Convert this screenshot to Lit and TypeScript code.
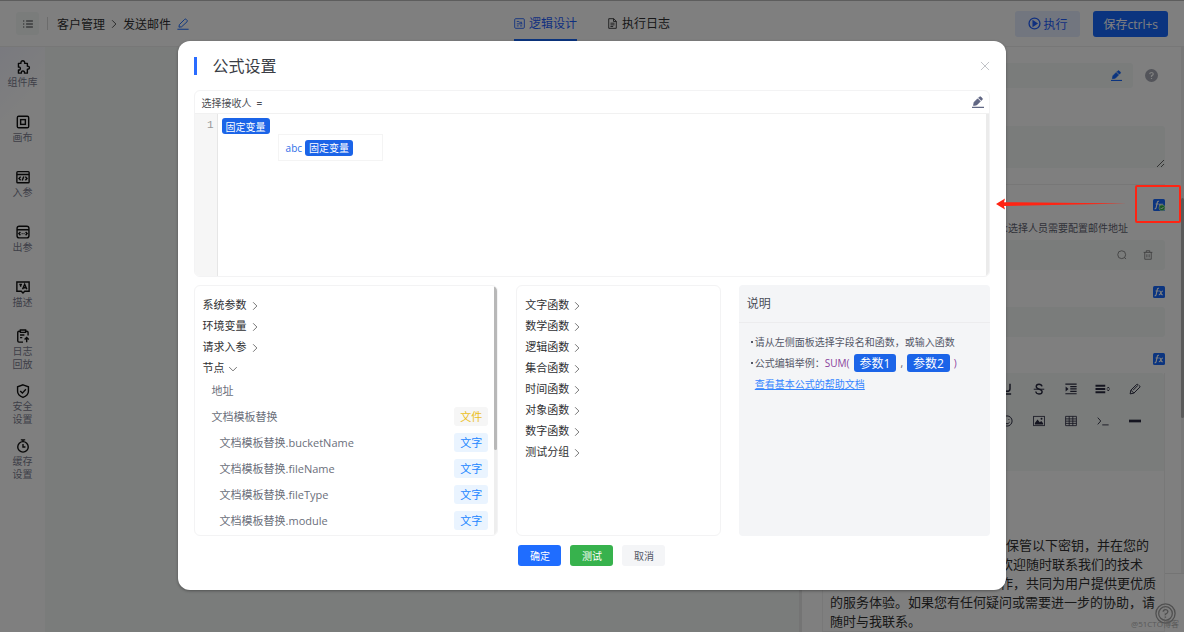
import { LitElement, html, css, svg } from "lit";
import { customElement, property } from "lit/decorators.js";

const shapes: Record<string, any> = {
  list: svg`<path d="M5.5 4h9M5.5 8h9M5.5 12h9M1.5 4h1.5M1.5 8h1.5M1.5 12h1.5"/>`,
  edit: svg`<path d="M.5 15h15M2.6 12.200l.6-3.400L10.200 1.800q1-1 2 0l1.200 1.200q1 1 0 2L6.200 11.700z"/>`,
  editSolid: svg`<path d="M0 15.200h16" stroke-width="1.600"/><path fill="currentColor" stroke="currentColor" stroke-width="1" stroke-linejoin="round" d="M2 12.600l.8-4.200 4.700-4.700 3.500 3.500-4.700 4.700zM8.800 2.500l1.100-1.100q1-.9 2 0l1.500 1.500q1 1 0 2l-1.100 1.100z"/>`,
  next: svg`<path d="M5 2l6 6-6 6"/>`,
  down: svg`<path d="M2 5l6 6 6-6"/>`,
  close: svg`<path d="M1.500 1.500l13 13M14.500 1.500l-13 13"/>`,
  puzzle: svg`<path stroke-linejoin="round" d="M2.800 3.800h2.900C5.200 1.900 6.400.9 7.800.9s2.600 1 2 2.900H13v3.300c1.600-.3 2.300.6 2.300 1.700S14.600 10.700 13 10.400V15h-3.300c.3-1.800-.6-2.500-1.800-2.500s-2 .7-1.700 2.500H2.800v-3.600c1.600.3 2.200-.6 2.200-1.700s-.8-2-2.200-1.700z"/>`,
  canvas: svg`<rect x="1.500" y="1.500" width="13" height="13" rx="1.500"/><rect x="5.300" y="5.300" width="5.400" height="5.400"/>`,
  codeIn: svg`<rect x="1" y="1.800" width="14" height="12.800" rx="1"/><path d="M1 5.200h14M5.300 7.600L3.400 9.700l1.900 2M10.700 7.600l1.900 2.100-1.900 2M8.900 7.300l-1.800 4.800"/>`,
  codeOut: svg`<rect x="1.200" y="1.500" width="13.600" height="13.200" rx="2.500"/><path d="M1.200 5.400h13.600M5 8l-1.700 1.800L5 11.600M11 8l1.700 1.800L11 11.600M6.500 9.800h1M8.700 9.800h1"/>`,
  describe: svg`<path d="M1 2.200h14v10.600h-5L8 14.800l-2-2H1zM3.800 5.200h3M5.300 5.200v2.500M7.500 10.600L9.900 4.800l2.500 5.800M8.300 8.900h3.200"/>`,
  replay: svg`<path d="M5 2.600H3.400q-1.400 0-1.400 1.400v9.500q0 1.500 1.400 1.500H8M11 2.600h1.400q1.400 0 1.400 1.400v3.500M5 1.200h6v2.600H5zM4.600 6.800h5M4.600 9.800h2.600M12.200 15.200V10M9.800 12l2.400-2.400L14.600 12"/>`,
  shield: svg`<path d="M8 .9l6.200 2.300v5.200c0 3.400-2.600 5.700-6.200 6.900-3.600-1.200-6.200-3.500-6.200-6.900V3.200zM4.800 8l2.500 2.400 4-4.400"/>`,
  timer: svg`<circle cx="8" cy="9" r="6"/><path d="M5.500 1h5M8 1v2M8 5.800V9.200h2.800"/>`,
  logic: svg`<rect x="1" y="1" width="14" height="14" rx="1.500"/><path d="M4 5h3l1 1.200h3.800M4 8.500h8L10.300 7M4 11.500h2.800M8.800 11.500H12"/>`,
  doc: svg`<path d="M2.500 1h7.300l3.700 3.700V15h-11zM9.500 1v4h4M5 7.500h6M5 10h6M5 12.400h4"/>`,
  play: svg`<circle cx="8" cy="8" r="6.700"/><path fill="currentColor" d="M6.300 5v6l4.600-3z"/>`,
  search: svg`<circle cx="7.500" cy="7.500" r="6.300"/><path d="M12 12l2.500 2.500"/>`,
  trash: svg`<path d="M1 3.800h14M5.200 3.500V1.200h5.600v2.300M2.800 3.800v11h10.400v-11M6.200 6.800v5M9.800 6.800v5"/>`,
  underline: svg`<path stroke-width="2" d="M4 1V7.500q0 3.500 4 3.500T12 7.500V1M2.500 14.500h11"/>`,
  strike: svg`<path d="M1 8.300h14"/><path stroke-width="1.800" d="M12 4.400C11.600 2.500 10.200 1.600 8 1.600S4.300 2.800 4.300 4.700 5.700 7.400 8 8.100s4.200 1.300 4.200 3.400S10.500 14.600 8 14.600s-4-1.200-4.300-3.300"/>`,
  indent: svg`<path stroke-width="1.600" d="M.5 1.500h15M7 4.700h8.500M7 7.900h8.500M7 11.100h8.500M.5 14.300h15"/><path fill="currentColor" stroke="none" d="M.8 4.600v6.600L4.700 7.900z"/>`,
  lineHeight: svg`<path stroke-width="2.800" d="M-2 3.700h13M-2 8h13M-2 12.300h13"/><path stroke-width="1.300" d="M15 5.400l1.500 2M15 5.400l-1.500 2M15 10.600l1.500-2M15 10.600l-1.500-2"/>`,
  brush: svg`<path d="M1.500 14.500l1-5 7.800-7.600M1.500 14.500l5-1 8-8M2.500 9.500l4 4M5.500 9.500L12 3M10.300 1.900q1.500-.8 2 .8M14.500 5.500q.8-1.500-.8-2"/>`,
  smile: svg`<circle cx="8" cy="8" r="6.800"/><path d="M4.500 9.500q3.500 4.500 7 0M5.500 5.500v1.200M10.500 5.500v1.200"/>`,
  image: svg`<rect x=".8" y="1.800" width="14.400" height="12.400" stroke-width="1.100"/><path fill="currentColor" stroke="none" d="M2.500 12.500v-2L6 6l3 3.500 2-1.500 2.500 3v1.500z"/><circle cx="11.400" cy="5" r="1.300" fill="currentColor" stroke="none"/>`,
  grid: svg`<path stroke-width="1.100" d="M.8 1.800h14.400v12.400H.8zM.8 5.200h14.400M.8 8.200h14.400M.8 11.200h14.400M5.600 1.800v12.400M10.400 1.800v12.400"/>`,
  terminal: svg`<path stroke-width="1.200" d="M1 3.500L5 8l-4 4.500M7 13.200h8.500"/>`,
  rule: svg`<path stroke-width="3.600" d="M0 8h16"/>`,
  fx: svg`<rect width="16" height="16" rx="2" fill="currentColor" stroke="none"/><path stroke="#fff" stroke-width="1.500" d="M8 3.200q-1.900-.7-2.300 1.400L4.200 11.500q-.4 1.800-2 1.300M3.500 6.700h4M8.500 6.800q1.200-.3 1.700 1.500l.8 2q.5 1.700 2 1.200M13.300 6.700q-1.300 0-2.300 1.700l-1 1.500q-.9 1.700-2.200 1.600"/>`,
  fxOk: svg`<rect width="16" height="16" rx="2" fill="currentColor" stroke="none"/><path stroke="#fff" stroke-width="1.500" d="M8 3.200q-1.900-.7-2.300 1.400L4.200 11.500q-.4 1.800-2 1.300M3.500 6.700h4M9 10V7h4.500"/><circle cx="12" cy="11.800" r="4" fill="#2fb344" stroke="#dff5e2" stroke-width=".8"/><path stroke="#fff" d="M10 11.800l1.500 1.500 2.500-2.700"/>`,
  help: svg`<circle cx="8" cy="8" r="8" fill="currentColor" stroke="none"/><path stroke="#fff" stroke-width="1.500" d="M5.800 6.300Q6 4.300 8 4.300t2.200 1.900Q10.200 7.300 8 8.500v1.200M8 11v1.400"/>`,
  helpRing: svg`<circle cx="8" cy="8" r="7.300" stroke-width="1"/><circle cx="8" cy="8" r="5.200" stroke-width="1"/><path d="M6.200 6.700Q6.300 5 8 5t1.800 1.600Q9.800 7.500 8 8.500v.8M8 10.300v1"/>`,
};

@customElement("app-icon")
export class AppIcon extends LitElement {
  @property() name = "";
  @property({ type: Number }) size = 14;
  @property({ type: Number }) weight = 1.3;

  static styles = css`
    :host { display: inline-flex; flex: none; }
    svg { display: block; overflow: visible; }
  `;

  render() {
    return html`<svg width=${this.size} height=${this.size} viewBox="0 0 16 16" fill="none"
      stroke="currentColor" stroke-width=${this.weight} aria-hidden="true">${shapes[this.name]}</svg>`;
  }
}

@customElement("app-root")
export class AppRoot extends LitElement {
  private nav = [
    ["puzzle", "组件库"], ["canvas", "画布"], ["codeIn", "入参"], ["codeOut", "出参"],
    ["describe", "描述"], ["replay", "日志回放"], ["shield", "安全设置"], ["timer", "缓存设置"],
  ];
  private groups = ["系统参数", "环境变量", "请求入参"];
  private nodes = [
    { name: "地址" },
    { name: "文档模板替换", tag: "文件", file: true },
    { name: "文档模板替换.bucketName", tag: "文字", child: true },
    { name: "文档模板替换.fileName", tag: "文字", child: true },
    { name: "文档模板替换.fileType", tag: "文字", child: true },
    { name: "文档模板替换.module", tag: "文字", child: true },
  ] as { name: string; tag?: string; file?: boolean; child?: boolean }[];
  private functions = ["文字函数", "数学函数", "逻辑函数", "集合函数", "时间函数", "对象函数", "数字函数", "测试分组"];
  private tools = [
    ["underline", "strike", "indent", "lineHeight", "brush"],
    ["smile", "image", "grid", "terminal", "rule"],
  ];

  static styles = css`
    :host {
      display: block;
      position: relative;
      height: 100vh;
      overflow: hidden;
      font-family: "Open Sans", "Noto Sans CJK SC", sans-serif;
      font-size: 11px;
      color: #303133;
      background: #fff;
    }
    * { box-sizing: border-box; }
    button, input, textarea { font: inherit; color: inherit; border: 0; margin: 0; padding: 0; background: none; }
    p, h1, h2, ul { margin: 0; padding: 0; font-weight: 400; list-style: none; }

    .page { display: flex; flex-direction: column; height: 100%; border-top: 1px solid #bbb; }
    .top { display: grid; grid-template-columns: 1fr auto 1fr; flex: none; height: 46px; padding: 0 16px; border-bottom: 1px solid #efefef; font-size: 12px; }
    .crumbs { display: flex; align-items: center; }
    .menu { display: flex; align-items: center; justify-content: center; width: 23px; height: 23px; border-radius: 3px; background: #f4f8f7; }
    .split { width: 1px; height: 13px; margin: 0 9px 0 8px; background: #d8d8d8; }
    .arrow { margin: 0 4px; }
    .rename { display: flex; margin-left: 6px; color: #1769ff; }
    .tabs { display: flex; gap: 30px; }
    .tab { display: flex; align-items: center; gap: 4px; height: 40px; padding-top: 6px; border-bottom: 2px solid transparent; color: #303133; text-decoration: none; }
    .tab.on { color: #1f5fff; border-color: #1769ff; }
    .actions { display: flex; align-items: center; justify-content: flex-end; gap: 13px; }
    .act { display: flex; align-items: center; justify-content: center; gap: 2px; height: 26px; padding: 0 13px; border-radius: 3px; color: #1f5fff; background: #e4ecff; }
    .act.save { color: #fff; background: #1769ff; padding: 0 10px; }

    .work { display: flex; flex: 1; min-height: 0; }
    .side { display: flex; flex-direction: column; width: 45px; background: linear-gradient(135deg, #f3f4ff, #fff 60px); }
    .item { display: flex; flex-direction: column; align-items: center; justify-content: center; gap: 2px; height: 55px; color: #111; }
    .name { max-width: 30px; color: #7c8090; font-size: 10px; line-height: 13px; text-align: center; }
    .name.wrap { max-width: 20px; }
    .stage { flex: 1; background: #f4f8f6; border-right: 3px solid #e8e9e9; }

    .panel { display: flex; width: 382px; overflow: hidden; }
    .form { display: flex; flex-direction: column; flex: 1; padding: 16px 0 0 20px; }
    .line { display: flex; align-items: center; gap: 12px; padding-right: 7px; }
    .box { display: flex; align-items: center; justify-content: flex-end; flex: 1; gap: 16px; padding-right: 12px; border-radius: 3px; background: #f4f8f7; color: #777; }
    .box input { flex: 1; min-width: 0; height: 100%; }
    .short { height: 25px; padding-right: 11px; color: #1769ff; }
    .mid { height: 29px; }
    .q { color: #a6a9b4; }
    .note { display: block; height: 42px; margin-top: 38px; border-radius: 3px; background: #f4f8f7; resize: vertical; }
    .rulebar { height: 1px; margin: 16px 0 14px; background: #eee; }
    .fx { display: flex; align-self: flex-end; color: #1769ff; }
    .hint { margin: 10px 37px 5px 0; color: #626473; font-size: 10px; line-height: 14px; text-align: right; }
    .gap { margin: 16px 0 9px; }
    .gap.low { margin-bottom: 8px; }
    .rich { flex: 1; border: 1px solid #f1f1f1; border-top: 0; }
    .bar { display: flex; flex-direction: column; gap: 20px; height: 98px; padding: 10px 23px 0 0; background: #f4f8f7; border-radius: 3px 3px 0 0; color: #2a2b40; }
    .bar div { display: flex; justify-content: flex-end; gap: 20px; }
    .bar button { display: flex; }
    .mail { padding: 65px 0 0 7px; font-size: 13px; line-height: 19px; white-space: nowrap; color: #303030; }
    .mail .first { padding-left: 176px; }
    .mail .cont { padding-left: 170px; }
    .gutter { width: 19px; height: 527px; border-bottom: 1px solid #e8e8e8; display: flex; justify-content: flex-end; }
    .track { width: 3px; padding-top: 151px; background: #f1f1f1; }
    .thumb { height: 220px; background: #b5b5b5; border-radius: 2px; }
    .assist { position: absolute; right: 8px; bottom: 8px; display: flex; color: #a0a0a0; }
    .mark { position: absolute; right: 5px; bottom: 2px; font-size: 8px; line-height: 12px; color: #b4b4b4; }

    .mask { position: absolute; inset: 0; display: flex; align-items: flex-start; justify-content: center; padding-top: 41px; background: rgba(0, 0, 0, 0.5); }
    .dialog { display: flex; flex-direction: column; width: 70%; padding: 16px 16px 24px; border-radius: 12px; background: #fff; box-shadow: 0 1px 3px rgba(0, 0, 0, 0.35); }
    .head { display: flex; align-items: center; height: 18px; margin-bottom: 15px; }
    .title { flex: 1; padding-left: 16px; border-left: 3px solid #2a6cff; font-size: 16px; line-height: 18px; color: #3a3d45; }
    .x { display: flex; color: #b4b6bb; }
    .editor { border: 1px solid #f3f3f4; border-radius: 6px; overflow: hidden; }
    .ehead { display: flex; align-items: center; justify-content: space-between; height: 23px; padding: 0 5px 0 7px; border-bottom: 1px solid #f1f1f1; font-size: 10px; color: #4b4d52; }
    .ehead button { display: flex; color: #616784; }
    .eq { margin-left: 5px; font-weight: 600; }
    .code { display: flex; height: 162px; border-right: 3px solid #ebebeb; }
    .nums { width: 23px; padding: 4px 3px 0 0; border-right: 1px solid #e6e6e6; background: #f6f6f6; color: #999; font-family: "Liberation Mono", monospace; line-height: 14px; text-align: right; }
    .src { padding: 4px; }
    .chip { display: inline-flex; align-items: center; height: 16px; padding: 0 4px; border-radius: 3px; background: #1b64e8; color: #fff; font-size: 10px; }
    .suggest { display: flex; align-items: center; gap: 3px; width: 105px; height: 27px; margin-left: 56px; padding-left: 7px; border: 1px solid #f4f4f4; color: #2f6fe8; font-size: 10px; }

    .cols { display: grid; grid-template-columns: 304fr 204fr 251fr; gap: 18px; height: 251px; margin: 8px 0 9px; }
    .card { border: 1px solid #f3f3f4; border-radius: 6px; overflow: hidden; padding: 7px 8px 0; }
    .tree { display: flex; padding: 0 0 0 8px; }
    .tree ul { flex: 1; padding: 7px 6px 0 0; }
    .scroll { width: 3px; background: #eee; }
    .scroll div { height: 164px; background: #b8b8b8; border-radius: 2px; }
    .fold { display: flex; align-items: center; gap: 3px; height: 21px; }
    .fold app-icon { padding-top: 4px; color: #555; }
    .node { display: flex; align-items: center; justify-content: space-between; height: 26px; padding-left: 9px; color: #6b6f7b; }
    .node.child { padding-left: 17px; }
    .tag { display: flex; align-items: center; height: 19px; padding: 0 6px; border-radius: 3px; background: #eaf4ff; color: #2286ff; }
    .tag.file { background: #f6f6f6; color: #ecc01d; }
    .info { border: 0; border-radius: 4px; padding: 0; background: #f4f5f7; color: #555867; font-size: 10px; }
    .info h2 { height: 38px; padding: 0 8px; border-bottom: 1px solid #ececee; font-size: 12px; line-height: 37px; color: #4a4d57; }
    .info ul { display: flex; flex-direction: column; padding: 8px 12px; }
    .info li { display: flex; align-items: center; height: 21px; white-space: nowrap; }
    .dot { width: 2px; height: 2px; margin-right: 2px; background: #555867; }
    .sum { color: #8a3f9c; }
    .arg { display: inline-flex; align-items: center; height: 18px; margin: 0 4px; padding: 0 6px; border-radius: 3px; background: #1b64e8; color: #fff; font-size: 12px; }
    .info a { margin-left: 4px; color: #3485ff; }
    .foot { display: flex; justify-content: center; gap: 9px; }
    .btn { width: 43px; height: 21px; border-radius: 3px; background: #f4f5f7; color: #555867; font-size: 10px; }
    .btn.ok { background: #1f6dff; color: #fff; }
    .btn.test { background: #37b24d; color: #fff; }

    .ring { position: absolute; top: 185px; right: 3px; width: 46px; height: 38px; border: 2px solid #ff2413; border-radius: 2px; }
    .pointer { position: absolute; top: 198px; right: 56px; display: block; }
  `;

  render() {
    return html`
      <div class="page">
        <header class="top">
          <div class="crumbs">
            <button class="menu" aria-label="菜单"><app-icon name="list" size="12"></app-icon></button>
            <span class="split"></span>
            <span>客户管理</span>
            <app-icon class="arrow" name="next" size="10"></app-icon>
            <span>发送邮件</span>
            <button class="rename" aria-label="重命名"><app-icon name="edit" size="12"></app-icon></button>
          </div>
          <nav class="tabs">
            <a class="tab on" href="#design"><app-icon name="logic" size="11"></app-icon>逻辑设计</a>
            <a class="tab" href="#log"><app-icon name="doc" size="11"></app-icon>执行日志</a>
          </nav>
          <div class="actions">
            <button class="act"><app-icon name="play" size="13" weight="1.600"></app-icon>执行</button>
            <button class="act save">保存ctrl+s</button>
          </div>
        </header>
        <div class="work">
          <nav class="side">
            ${this.nav.map(([icon, name]) => html`
              <button class="item"><app-icon name=${icon} weight="1.600"></app-icon>
                <span class="name ${name.length > 3 ? "wrap" : ""}">${name}</span></button>`)}
          </nav>
          <main class="stage"></main>
          <aside class="panel">
            <div class="form">
              <div class="line">
                <div class="box short"><input aria-label="名称"><app-icon name="editSolid" size="11"></app-icon></div>
                <app-icon class="q" name="help" size="13"></app-icon>
              </div>
              <textarea class="note" aria-label="描述"></textarea>
              <div class="rulebar"></div>
              <button class="fx" aria-label="公式"><app-icon name="fxOk" size="12"></app-icon></button>
              <p class="hint">注:选择人员需要配置邮件地址</p>
              <div class="box mid"><input aria-label="接收人"><app-icon name="search" size="10"></app-icon><app-icon name="trash" size="10"></app-icon></div>
              <button class="fx gap" aria-label="公式"><app-icon name="fx" size="12"></app-icon></button>
              <div class="box mid"><input aria-label="主题"></div>
              <button class="fx gap low" aria-label="公式"><app-icon name="fx" size="12"></app-icon></button>
              <div class="rich">
                <div class="bar">
                  ${this.tools.map(row => html`<div>${row.map(t => html`<button aria-label=${t}><app-icon name=${t} size="12"></app-icon></button>`)}</div>`)}
                </div>
                <div class="mail">
                  <p class="first">保管以下密钥，并在您的</p>
                  <p class="cont">欢迎随时联系我们的技术</p>
                  <p class="cont">作，共同为用户提供更优质</p>
                  <p>的服务体验。如果您有任何疑问或需要进一步的协助，请</p>
                  <p>随时与我联系。</p>
                </div>
              </div>
            </div>
            <div class="gutter"><div class="track"><div class="thumb"></div></div></div>
          </aside>
        </div>
        <button class="assist" aria-label="帮助"><app-icon name="helpRing" size="21" weight="1"></app-icon></button>
        <span class="mark">@51CTO博客</span>
      </div>

      <div class="mask">
        <section class="dialog" role="dialog" aria-modal="true" aria-labelledby="title">
          <div class="head">
            <h1 class="title" id="title">公式设置</h1>
            <button class="x" aria-label="关闭"><app-icon name="close" size="10"></app-icon></button>
          </div>
          <div class="editor">
            <div class="ehead"><span>选择接收人<span class="eq">=</span></span><button aria-label="编辑"><app-icon name="editSolid" size="12"></app-icon></button></div>
            <div class="code">
              <div class="nums">1</div>
              <div class="src">
                <span class="chip">固定变量</span>
                <div class="suggest"><span>abc</span><span class="chip">固定变量</span></div>
              </div>
            </div>
          </div>
          <div class="cols">
            <div class="card tree">
              <ul>
                ${this.groups.map(g => html`<li><button class="fold">${g}<app-icon name="next" size="10"></app-icon></button></li>`)}
                <li><button class="fold">节点<app-icon name="down" size="10"></app-icon></button></li>
                ${this.nodes.map(n => html`<li class="node ${n.child ? "child" : ""}"><span>${n.name}</span>
                  ${n.tag ? html`<span class="tag ${n.file ? "file" : ""}">${n.tag}</span>` : ""}</li>`)}
              </ul>
              <div class="scroll"><div></div></div>
            </div>
            <div class="card">
              <ul>${this.functions.map(f => html`<li><button class="fold">${f}<app-icon name="next" size="10"></app-icon></button></li>`)}</ul>
            </div>
            <div class="card info">
              <h2>说明</h2>
              <ul>
                <li><span class="dot"></span>请从左侧面板选择字段名和函数，或输入函数</li>
                <li><span class="dot"></span>公式编辑举例：<span class="sum">SUM(</span><span class="arg">参数1</span>,<span class="arg">参数2</span><span class="sum">)</span></li>
                <li><a href="#help">查看基本公式的帮助文档</a></li>
              </ul>
            </div>
          </div>
          <div class="foot">
            <button class="btn ok">确定</button>
            <button class="btn test">测试</button>
            <button class="btn">取消</button>
          </div>
        </section>
      </div>
      <div class="ring"></div>
      <svg class="pointer" width="132" height="12" viewBox="0 0 132 12" aria-hidden="true">
        <path fill="#ff2413" d="M0 6L9 .5 8 4.200 130 5.400 8 8 9 11.500z"/>
      </svg>
    `;
  }
}
